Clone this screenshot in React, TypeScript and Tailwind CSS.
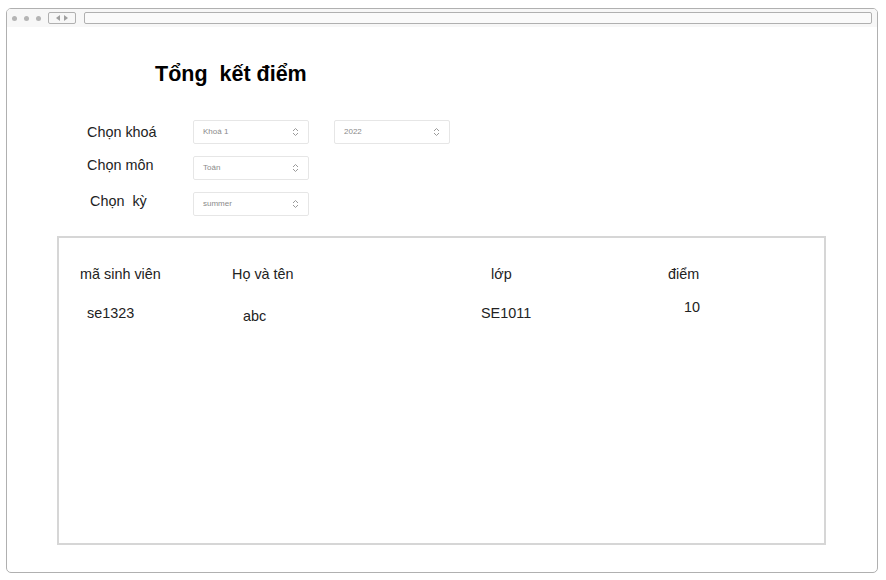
import React from 'react';

const font = { fontFamily: '"Liberation Sans", Arial, sans-serif' };

const Chevrons: React.FC = () => (
  <svg width="7" height="10" viewBox="0 0 7 10" fill="none" stroke="#9a9a9a" strokeWidth="1">
    <path d="M1 4 L3.5 1.5 L6 4" />
    <path d="M1 6 L3.5 8.5 L6 6" />
  </svg>
);

const Select: React.FC<{ value: string }> = ({ value }) => (
  <div className="w-[116px] h-[24px] border border-[#e6e6e6] rounded-[2px] bg-white flex items-center justify-between pl-[9px] pr-[9px]">
    <span className="text-[8px] text-[#8a8a8a]">{value}</span>
    <Chevrons />
  </div>
);

export default function App() {
  return (
    <div className="w-[886px] h-[580px] bg-white pt-[8px] pl-[6px]" style={font}>
      <div className="w-[872px] h-[565px] border border-[#b0b0b0] rounded-[5px] overflow-hidden bg-white">
        {/* browser toolbar */}
        <div className="h-[18px] bg-[#f7f7f7] flex items-center pl-[5px] pr-[5px]">
          <div className="flex gap-[7px]">
            <span className="w-[5px] h-[5px] rounded-full bg-[#b5b5b5]" />
            <span className="w-[5px] h-[5px] rounded-full bg-[#b5b5b5]" />
            <span className="w-[5px] h-[5px] rounded-full bg-[#b5b5b5]" />
          </div>
          <div className="ml-[7px] w-[28px] h-[12px] border border-[#b0b0b0] rounded-[2px] flex items-center justify-center gap-[4px]">
            <svg width="4" height="6" viewBox="0 0 4 6"><path d="M4 0 L0 3 L4 6 Z" fill="#a0a0a0" /></svg>
            <svg width="4" height="6" viewBox="0 0 4 6"><path d="M0 0 L4 3 L0 6 Z" fill="#a0a0a0" /></svg>
          </div>
          <div className="ml-[8px] flex-1 h-[12px] border border-[#b0b0b0] rounded-[2px] bg-[#fafafa]" />
        </div>

        {/* title */}
        <h1 className="mt-[33px] ml-[148px] text-[21.5px] leading-[28px] font-bold text-black whitespace-pre">
          Tổng  kết điểm
        </h1>

        {/* filters */}
        <div className="mt-[32px] ml-[80px] flex flex-col gap-[12px] text-[14.4px] text-[#222]">
          <div className="flex items-center">
            <span className="w-[106px] mt-[2px]">Chọn khoá</span>
            <Select value="Khoá 1" />
            <div className="ml-[25px]">
              <Select value="2022" />
            </div>
          </div>
          <div className="flex items-center">
            <span className="w-[106px] -mt-[4px]">Chọn môn</span>
            <Select value="Toán" />
          </div>
          <div className="flex items-center">
            <span className="w-[106px] pl-[3px] -mt-[4px] whitespace-pre">Chọn  kỳ</span>
            <Select value="summer" />
          </div>
        </div>

        {/* results table */}
        <div className="mt-[20px] ml-[50px] w-[769px] h-[309px] border-2 border-[#d6d6d6] pt-[26px] pl-[21px] text-[14.4px] leading-[20px] text-[#222]">
          <div className="grid grid-cols-[152px_249px_177px_1fr]">
            <span>mã sinh viên</span>
            <span>Họ và tên</span>
            <span className="ml-[10px]">lớp</span>
            <span className="ml-[10px]">điểm</span>
          </div>
          <div className="grid grid-cols-[152px_249px_177px_1fr] mt-[19px] items-start">
            <span className="ml-[7px]">se1323</span>
            <span className="ml-[11px] mt-[3px]">abc</span>
            <span>SE1011</span>
            <span className="ml-[26px] -mt-[6px]">10</span>
          </div>
        </div>
      </div>
    </div>
  );
}
